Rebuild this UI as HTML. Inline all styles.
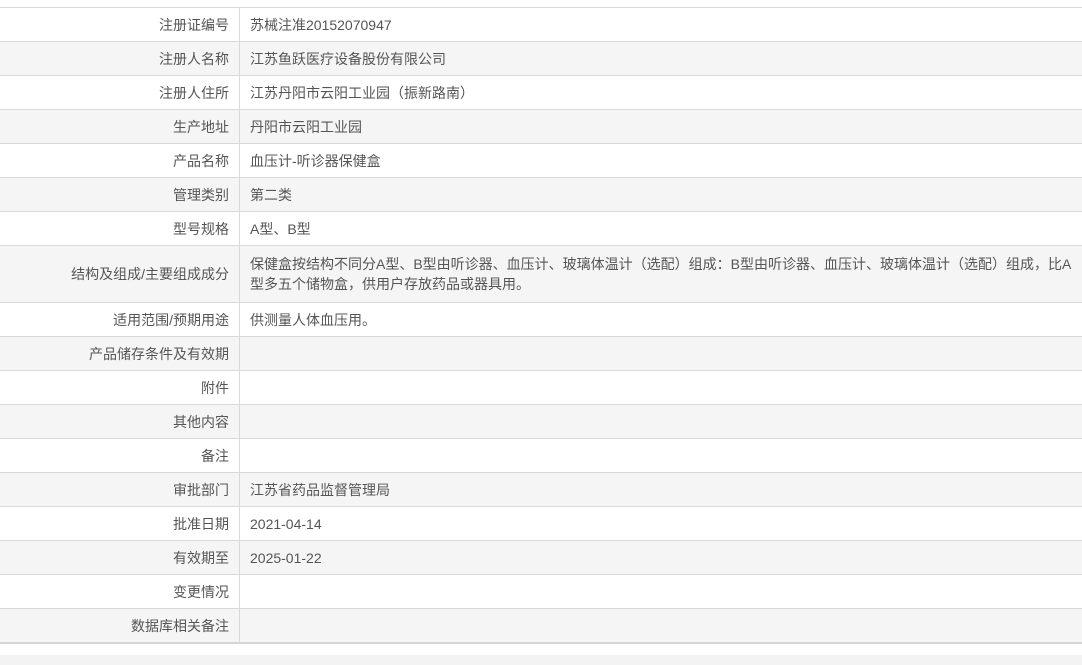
<!DOCTYPE html>
<html><head><meta charset="utf-8"><style>
body{margin:0;background:#fff;width:1082px;height:665px;overflow:hidden;font-family:"Liberation Sans","Noto Sans CJK SC",sans-serif;font-size:14px;color:#555;}
table{position:absolute;top:7px;left:0;width:1082px;border-collapse:collapse;border-top:1px solid #d9d9d9;border-bottom:2px solid #d4d4d4}
td{border-bottom:1px solid #d9d9d9;height:33px;padding:0 10px;line-height:20px}
td.l{width:219px;text-align:right;border-right:1px solid #d9d9d9}
tr:nth-child(even) td{background:#f5f5f5}
.band{position:absolute;top:655px;left:0;width:1082px;height:10px;background:#f3f3f3}
</style></head><body>
<table>
<tr><td class="l">注册证编号</td><td>苏械注准20152070947</td></tr>
<tr><td class="l">注册人名称</td><td>江苏鱼跃医疗设备股份有限公司</td></tr>
<tr><td class="l">注册人住所</td><td>江苏丹阳市云阳工业园（振新路南）</td></tr>
<tr><td class="l">生产地址</td><td>丹阳市云阳工业园</td></tr>
<tr><td class="l">产品名称</td><td>血压计-听诊器保健盒</td></tr>
<tr><td class="l">管理类别</td><td>第二类</td></tr>
<tr><td class="l">型号规格</td><td>A型、B型</td></tr>
<tr><td class="l" style="height:56px">结构及组成/主要组成成分</td><td style="padding-right:6px">保健盒按结构不同分A型、B型由听诊器、血压计、玻璃体温计（选配）组成：B型由听诊器、血压计、玻璃体温计（选配）组成，比A型多五个储物盒，供用户存放药品或器具用。</td></tr>
<tr><td class="l">适用范围/预期用途</td><td>供测量人体血压用。</td></tr>
<tr><td class="l">产品储存条件及有效期</td><td></td></tr>
<tr><td class="l">附件</td><td></td></tr>
<tr><td class="l">其他内容</td><td></td></tr>
<tr><td class="l">备注</td><td></td></tr>
<tr><td class="l">审批部门</td><td>江苏省药品监督管理局</td></tr>
<tr><td class="l">批准日期</td><td>2021-04-14</td></tr>
<tr><td class="l">有效期至</td><td>2025-01-22</td></tr>
<tr><td class="l">变更情况</td><td></td></tr>
<tr><td class="l">数据库相关备注</td><td></td></tr>
</table>
<div class="band"></div>
</body></html>
